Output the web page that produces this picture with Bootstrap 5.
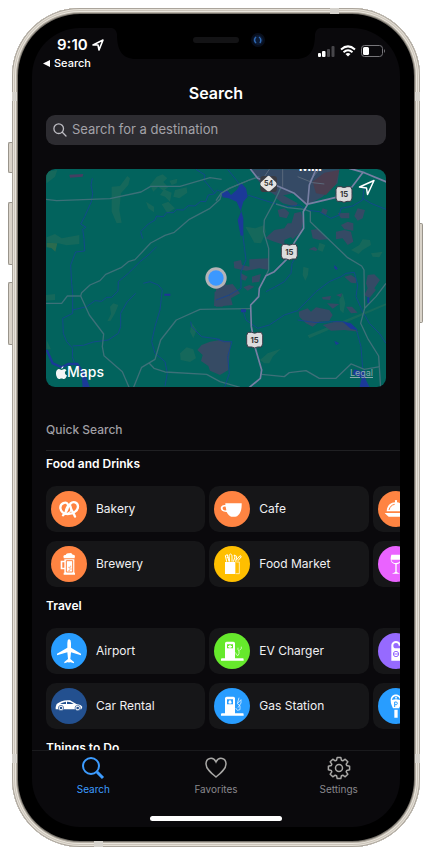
<!DOCTYPE html>
<html lang="en">
<head>
<meta charset="utf-8">
<meta name="viewport" content="width=device-width, initial-scale=1">
<title>Search</title>
<link href="https://cdn.jsdelivr.net/npm/bootstrap@5.3.0/dist/css/bootstrap.min.css" rel="stylesheet">
<style>
  body { font-family: Inter, "Liberation Sans", sans-serif; background: #fff; }
  .stage { height: 100vh; min-height: 600px; padding: 8px 12px; }
  .phone {
    border-radius: 68px; padding: 20px; background: #000;
    box-shadow: inset 0 0 0 1px #aaa49b, inset 0 0 0 2px #e6e1d8, inset 0 0 0 3px #cdc6bb,
      inset 0 0 0 4px #e9e5dd, inset 0 0 0 5px #b5aea3, inset 0 0 0 6px #77736c;
  }
  .side-key { position: absolute; width: 4px; left: -4px; border-radius: 2px 0 0 2px; background: #d9d3c9; border: 1px solid #99948b; border-right: 0; }
  .key-mute { top: 134px; height: 31px; }
  .key-up { top: 194px; height: 63px; }
  .key-down { top: 274px; height: 63px; }
  .key-power { top: 215px; height: 100px; left: auto; right: -3px; width: 3px; border-radius: 0 2px 2px 0; border: 1px solid #99948b; border-left: 0; }
  .band { position: absolute; background: #d6d3cd; }
  .band-h { width: 9px; height: 6px; }
  .band-v { width: 5px; height: 9px; }
  .display { border-radius: 48px; background: #0a090c; color: #fff; }
  .notch { position: absolute; top: 0; left: 50%; transform: translateX(-50%); }
  .status { height: 52px; padding: 7px 15px 0 11px; }
  .clock { font-size: 15px; line-height: 20px; font-weight: 600; padding-left: 14px; gap: 4px; }
  .back-link { font-size: 11px; line-height: 16px; font-weight: 500; color: #fff; gap: 4px; }
  .signals { gap: 5px; padding-top: 10px; }
  .app-title { font-size: 16px; line-height: 24px; font-weight: 600; margin: 1px 0 10px; }
  .side-pad { padding: 0 14px; }
  .finder { background: #2d2c31; border-radius: 9px; height: 30px; padding: 0 7px; gap: 5px; }
  .finder input { background: none; border: 0; outline: 0; padding: 0; color: #fff; font-size: 13px; min-width: 0; }
  .finder input::placeholder { color: #a3a2a8; opacity: 1; }
  .map-box { height: 218px; margin: 24px 14px 0; border-radius: 9px; background: #02635d; }
  .map-brand { position: absolute; left: 10px; bottom: 6px; font-size: 14px; line-height: 18px; font-weight: 500; gap: 0; }
  .map-legal { position: absolute; right: 13px; bottom: 7px; font-size: 9px; line-height: 14px; color: #8aa9ab; }
  .map-locate { position: absolute; right: 11px; top: 10px; line-height: 0; }
  .quick-title { font-size: 12px; line-height: 16px; font-weight: 500; color: #a09fa4; margin: 35px 0 0 14px; padding-bottom: 12px; border-bottom: 1px solid #202023; }
  .group-title { font-size: 12px; line-height: 16px; font-weight: 600; margin: 0 0 14px 14px; }
  .group { margin-bottom: 11px; }
  .group-first { margin-top: 5px; }
  .tiles { display: grid; grid-template-rows: repeat(2, 46px); grid-auto-flow: column; grid-auto-columns: 45%; gap: 9px 4px; margin-left: 14px; overflow-x: auto; scrollbar-width: none; }
  .tiles::-webkit-scrollbar, .scroller::-webkit-scrollbar { display: none; }
  .tile { background: #161618; border: 0; border-radius: 10px; padding: 0 5px; gap: 9px; color: #f0f0f2; font-size: 12px; line-height: 18px; }
  .disc { width: 36px; height: 36px; flex: none; fill: #fff; border-radius: 50%; }
  .c-orange { background: #ff8442; } .c-yellow { background: #ffbf00; } .c-pink { background: #ea63ff; }
  .c-blue { background: #289dff; } .c-navy { background: #23508f; } .c-green { background: #66e92c; } .c-violet { background: #966aff; }
  .scroller { min-height: 0; overflow-y: auto; scrollbar-width: none; }
  .tabs { border-top: 1px solid #1a1a1d; padding-top: 5px; }
  .tabs a { color: #89888d; font-size: 10px; line-height: 12px; gap: 3px; }
  .tabs a.active { color: #3d9cff; }
  .tabs svg { fill: none; stroke: #a9a8a6; }
  .tabs .active svg { stroke: #3d9cff; }
  .home-bar { width: 36%; height: 5px; border-radius: 3px; background: #fff; margin: 21px auto 6px; }
</style>
</head>
<body>
<div class="stage">
  <div class="phone position-relative h-100">
    <span class="side-key key-mute"></span><span class="side-key key-up"></span><span class="side-key key-down"></span><span class="side-key key-power"></span>
    <span class="band band-h" style="top:0;left:78%"></span><span class="band band-h" style="bottom:0;left:20%"></span>
    <span class="band band-v" style="top:10%;left:0"></span><span class="band band-v" style="top:10%;right:0"></span>
    <span class="band band-v" style="bottom:10%;left:0"></span><span class="band band-v" style="bottom:10%;right:0"></span>

    <div class="display position-relative h-100 overflow-hidden d-flex flex-column">
      <svg class="notch" width="208" height="32" viewBox="0 0 208 32" aria-hidden="true">
        <path d="M0 0H208Q204 1 203 6C203 22 198 31 184 31H24C10 31 5 22 5 6Q4 1 0 0Z"/>
        <rect x="81" y="9" width="46" height="6" rx="3" fill="#131315"/>
        <circle cx="146" cy="12" r="7" fill="#080e1b"/><circle cx="146" cy="12" r="5" fill="#0c1b35"/>
        <path d="M144 9q-3 3 0 6M147 9q3 2 1 6" fill="none" stroke="#2e68b2" stroke-width="1.500"/>
      </svg>

      <header>
        <div class="status d-flex justify-content-between">
          <div>
            <div class="clock d-flex align-items-center">9:10
              <svg width="12" height="12" viewBox="0 0 12 12" fill="none" stroke="#fff" stroke-width="1.6" stroke-linejoin="round"><path d="M1 6L11 1L7 11L6 6Z"/></svg>
            </div>
            <a href="#" class="back-link d-flex align-items-center text-decoration-none">
              <svg width="7" height="7" viewBox="0 0 7 7" fill="#fff"><path d="M0 3.500L7 0V7Z"/></svg>Search
            </a>
          </div>
          <div class="signals d-flex align-items-center align-self-start">
            <svg width="17" height="12" viewBox="0 0 17 12" fill="#fff"><rect y="8" width="3" height="4" rx="1"/><rect x="4" y="6" width="3.500" height="6" rx="1"/><rect x="9" y="4" width="3" height="8" rx="1" fill="#47464a"/><rect x="13.500" y="1" width="3" height="11" rx="1" fill="#47464a"/></svg>
            <svg width="16" height="12" viewBox="0 0 16 12" fill="none" stroke="#fff" stroke-width="2"><path d="M1 4.500Q8-1.700 15 4.500M3.500 7.200Q8 3.200 12.500 7.200"/><path d="M5.500 9Q8 7 10.500 9L8 11.600Z" fill="#fff" stroke="none"/></svg>
            <svg width="24" height="12" viewBox="0 0 24 12"><rect x=".5" y=".5" width="21" height="11" rx="3" fill="none" stroke="#77767a"/><rect x="2" y="2" width="6" height="8" rx="1.500" fill="#fff"/><path d="M23 4v4q2-2 0-4" fill="#77767a"/></svg>
          </div>
        </div>
        <h1 class="app-title text-center">Search</h1>
        <div class="side-pad">
          <label class="finder d-flex align-items-center">
            <svg width="14" height="14" viewBox="0 0 14 14" fill="none" stroke="#bdbcc2" stroke-width="1.300" stroke-linecap="round"><circle cx="5.700" cy="5.700" r="4.800"/><path d="M9.300 9.300L13 13"/></svg>
            <input class="flex-fill" type="search" placeholder="Search for a destination" aria-label="Search for a destination">
          </label>
        </div>
      </header>

      <main class="scroller flex-fill">
        <div class="map-box position-relative overflow-hidden">
          <svg class="w-100 h-100 d-block" viewBox="0 0 340 218" preserveAspectRatio="xMidYMid slice" role="img" aria-label="Map">
            <!-- western half, drawn in thirds of a unit -->
            <g transform="translate(-6 -9) scale(.3333)">
              <g fill="#15685b">
                <path d="M215 80L240 78L262 48L270 55L265 75L243 100L238 150L245 188L230 190L215 155Z"/>
                <path d="M18 35L52 30L45 50L20 70ZM20 232L45 222L65 235L118 225V252L80 256L55 250L20 248ZM18 405L45 402V420L18 422ZM210 440L220 430L235 435L225 460L212 482L202 484L213 462ZM420 580L440 562L460 568L468 595L450 606L422 600ZM455 488L470 510L460 535L450 515ZM20 540L33 568H20Z"/>
                <path d="M330 75L350 50L368 43L382 55L370 66L385 82L370 92L355 80L340 95ZM388 62L412 56L410 70L395 75ZM372 88L395 98L390 125L375 110L360 105ZM405 90L440 82L442 98L418 115L400 110ZM318 125L342 140V157L325 145ZM365 133L385 125L405 145L382 160Z"/>
              </g>
              <path d="M20 248L52 250L46 275L34 264L20 262Z" fill="#2b6b4e"/>
              <path d="M88 44L130 42L128 50L90 53Z" fill="#453f62"/>
              <path d="M485 555L510 545L540 540L572 545L570 570L565 630L540 645L510 632L505 618L483 603L488 585L472 570Z" fill="#364b64"/>
              <path d="M524 395L540 390L560 400L548 440L522 438Z" fill="#354a65"/>
              <g fill="none" stroke="#174494" stroke-width="2.500" stroke-linejoin="round">
                <path d="M157 55L153 75L158 100L154 125L134 170L122 192L138 202L128 208L132 235L134 273L107 276L92 315L95 370L98 400V460L68 475L70 520L80 545L98 565L97 590L103 608"/>
                <path d="M98 450L140 440L165 422L185 424L200 412L215 412L234 393L235 365L265 340L300 305L325 285L350 260"/>
                <path d="M98 558L130 556L160 546L205 540L235 520L242 500V460L262 425L287 400"/>
                <path d="M310 370L330 365L355 375L367 390L360 450L345 500L335 545L345 580L375 605L382 640L375 678"/>
                <path d="M308 236L302 215L325 192L345 180L350 168L370 170L380 158L400 158L410 149L430 150L445 137L465 138L482 124L497 125L505 105L522 102L532 90L550 98M468 28L495 45L492 60L525 100"/>
                <path d="M452 485L455 500L485 530L540 538"/>
              </g>
              <path d="M20 570L38 610L65 622L85 612H112L130 640" fill="none" stroke="#1b3998" stroke-width="7"/>
              <path d="M124 632L134 640L150 684H128Z" fill="#1b3998"/>
              <path d="M373 404H391" stroke="#20339a" stroke-width="6"/>
              <g fill="none" stroke="#3d7078" stroke-width="4" stroke-linejoin="round">
                <path d="M18 118L50 122L210 116L303 96L332 79H420L510 53L545 58"/>
                <path d="M18 430H65L82 408H122L125 398L150 375L180 362L197 343L245 322L265 305L285 299L332 249L375 226L403 217L448 178L510 145L540 118L545 100L568 85L628 60"/>
                <path d="M122 408L148 465L191 522L187 560L192 587L247 635L268 684"/>
                <path d="M280 684L305 622L345 598L362 540L409 480L480 448L632 446M328 610L342 625L375 636L500 643L540 665L600 682"/>
              </g>
            </g>
            <!-- eastern half -->
            <g transform="translate(170 -9) scale(.3333)">
              <g fill="#15685b"><path d="M88 200L118 205L145 195L150 215L135 250L115 248L105 230ZM262 320L278 325L276 345L268 362L260 345ZM310 248L328 255L320 275L305 270ZM405 270L430 255L440 238L462 240L465 255L440 270L428 282ZM465 280L500 275L490 292L470 290ZM275 526L510 430V436L280 535ZM132 600L155 580L195 566L170 590L160 610L145 610ZM370 420L380 400L388 430L382 460L372 450Z"/></g>
              <g fill="#354a65">
                <path d="M104 28H370L365 70L340 90L320 110L272 136L230 100L185 110L150 88L125 60Z"/>
                <path d="M175 110L200 105L245 130L240 140L200 130ZM185 150L205 145L220 158L212 175L190 170ZM235 160L255 155L262 180L255 215L230 238L215 218L225 195ZM175 210L205 205L215 190L250 190L240 225L205 240L205 255L175 245L148 235Z"/>
                <path d="M285 210L305 207L330 230L335 238L310 240L290 235ZM278 268L295 260L305 268L300 273ZM365 160L400 158V175L375 175ZM395 185L412 190V212L385 208L375 195ZM425 145L447 150L440 175L425 182L415 168ZM360 215L385 210L405 215L412 245L395 255L380 235L360 238ZM320 145L335 150L330 165L315 158Z"/>
                <path d="M53 305L75 300L78 315L100 320V298L158 295V330L130 325L90 332L55 325ZM108 350L135 342L130 365L108 368ZM75 340L95 350L88 362L75 358ZM82 382L100 375L115 380L95 392ZM0 360L25 355L30 375L50 372L72 400L45 415L50 435L0 440Z"/>
                <path d="M248 455L275 445L285 455L300 442L340 450L350 465L340 482L310 485L290 500L270 490L250 470ZM318 412L345 408L342 420L320 418ZM333 430L370 432L350 446ZM320 495L365 483L392 490L405 505L430 515L385 510L345 512ZM385 350L405 345L420 355V370L405 368ZM455 345L475 343L492 360L475 385L480 390L460 415L445 405L455 385L450 370ZM360 405L378 400L375 412ZM390 440L408 440L425 458L405 460Z"/>
              </g>
              <path d="M290 65L325 38L370 30L360 72L330 105L300 100Z" fill="#4a3e50"/>
              <g fill="none" stroke="#174494" stroke-width="2.500" stroke-linejoin="round">
                <path d="M80 220L85 260L90 300L75 335V385L40 405L0 420"/>
                <path d="M150 395L175 382L205 365L225 340L228 310L240 290M95 105L180 132L215 140L250 135L270 150L310 155L345 175L370 165L375 145L410 138L440 120L445 80M440 115L465 130L510 148"/>
                <path d="M82 455L90 480L125 505L160 495L205 465L245 452L300 395L340 365L375 350L390 340L415 337L425 375L420 410L440 455L460 490L490 520L510 550M245 480L300 488L350 485L385 485L420 505L435 560L440 625M0 537L25 545L48 545L35 590L40 640L25 684M35 28L65 65L72 80"/>
              </g>
              <path d="M15 95L35 92L45 105L62 90L75 68L90 85L95 110L82 125L75 150L82 175V225L74 228L65 180L75 155L62 125L38 115L20 112Z" fill="#1b3998"/>
              <path d="M380 485L405 490L425 510L405 507ZM415 628L440 635L445 625L450 660L462 684H430L437 655L410 642ZM355 315L365 325L362 330L355 325ZM355 542L370 550L360 555ZM454 412H460V430H454ZM75 448H90V457H75Z" fill="#1b3998"/>
              <g fill="none" stroke="#3f7079" stroke-width="4" stroke-linejoin="round">
                <path d="M0 122L15 100L40 85L100 60L130 50M195 82L175 125L145 180L143 215L158 265V330L150 347M180 132L215 143L265 148L283 155V185L395 293L437 318L444 330L446 445L434 490L455 535L488 588L494 684M446 445L480 410L510 370M137 643L205 650L220 638L270 632L310 655H360L405 612L445 628L492 620"/>
              </g>
              <path d="M200 28V80M245 50L290 68L325 72M310 28L280 65M160 28L145 50" fill="none" stroke="#5a687b" stroke-width="3"/>
              <g fill="none" stroke="#777fa3" stroke-width="5" stroke-linejoin="round" stroke-linecap="round">
                <path d="M104 28L125 55L190 80L235 100L272 133L360 112L405 85L440 38M400 25L445 38L512 66M300 28L280 75L275 133L262 155L263 205L235 248L215 295L175 335L150 347L130 385L128 410L104 435L106 500L118 565L137 630L133 655L98 684"/>
              </g>
              <g font-family="Inter, sans-serif" font-weight="700" text-anchor="middle">
                <rect x="133" y="48" width="50" height="48" rx="10" fill="#3b3c43"/>
                <path d="M153 50Q158 45 163 50L180 67Q184 72 180 77L163 92Q158 96 153 92L135 77Q130 72 135 67Z" fill="#e5e3e2"/>
                <text x="158" y="79" font-size="21" fill="#333">54</text>
                <g id="us15"><path d="M364 80H375Q384 85 393 80H404Q410 88 408 100Q410 117 404 124H393Q384 130 375 124H364Q358 117 360 100Q358 88 364 80Z" fill="#dddcdd" stroke="#383946" stroke-width="3"/><text x="384" y="111" font-size="23" fill="#333">15</text></g>
                <use href="#us15" x="-164" y="173"/><use href="#us15" x="-268" y="437"/>
                <text x="283" y="33" font-size="40" fill="#fff">Mill</text>
              </g>
              <circle cx="0" cy="354" r="32" fill="#b5b4b7"/><circle cx="0" cy="354" r="23" fill="#3b98ff"/>
            </g>
          </svg>
          <div class="map-brand d-flex align-items-center">
            <svg width="11" height="13" viewBox="0 0 22 26" fill="#f2f5f5"><path d="M15 0Q15 5 10.500 6Q10 2 15 0ZM11 8C13 8 14 6 17 6Q20 6.500 21 8.500C16 12 17.500 17 22 19C20 24 18 26 16 26C14 26 13 25 11 25C9 25 8 26 6 26C3 26 0 20 0 15C0 8 4 6 6 6C8 6 9.500 8 11 8Z"/></svg>Maps
          </div>
          <button class="map-locate btn p-0 border-0" type="button" aria-label="Locate me"><svg width="17" height="17" viewBox="0 0 17 17" fill="none" stroke="#fff" stroke-width="1.500" stroke-linejoin="round"><path d="M1.500 8L16 1.500L9.500 15.500L8.500 9Z"/></svg></button>
          <a class="map-legal" href="#">Legal</a>
        </div>

        <h2 class="quick-title">Quick Search</h2>

        <section class="group group-first">
          <h3 class="group-title">Food and Drinks</h3>
          <div class="tiles">
            <button type="button" class="tile d-flex align-items-center text-start"><svg class="disc c-orange" viewBox="0 0 108 108" aria-hidden="true"><path d="M36 73C42 68 55 51 50 39C45 31 28 36 28 50C29 62 38 69 50 69C66 69 81 60 81 46C80 33 66 30 59 37C51 46 66 60 72 77" fill="none" stroke="#fff" stroke-width="7" stroke-linecap="round"/><path d="M43 62C44 52 48 44 56 43M50 67C62 63 63 52 57 42" fill="none" stroke="#fff" stroke-width="4"/></svg>Bakery</button>
            <button type="button" class="tile d-flex align-items-center text-start"><svg class="disc c-orange" viewBox="0 0 108 108" aria-hidden="true"><path d="M38 35Q35 26 44 27Q46 20 54 22Q62 18 65 26Q74 25 71 35V37H38ZM40 40H70V80H72V86H38V80H40V70H29V44H40ZM34 49V65H40V49Z"/><path d="M46 44H65V78H46V44" fill="none" stroke="#ff8442" stroke-width="3"/><path d="M52 64H58M54 69H62M59 59V64M52 74H57" stroke="#ff8442" stroke-width="2"/></svg>Brewery</button>
            <button type="button" class="tile d-flex align-items-center text-start"><svg class="disc c-orange" viewBox="0 0 108 108" aria-hidden="true"><path fill-rule="evenodd" d="M34 37H83C84 55 79 67 73 72Q70 77 64 77H52Q45 76 38 63C15 64 15 40 34 42ZM35 47C22 44 23 60 37 58Z"/></svg>Cafe</button>
            <button type="button" class="tile d-flex align-items-center text-start"><svg class="disc c-yellow" viewBox="0 0 108 108" aria-hidden="true"><path d="M33 48H64V84H33Z"/><path d="M67 48H76V83H65" fill="none" stroke="#fff" stroke-width="2"/><g fill="none" stroke="#fff" stroke-width="3"><path d="M38 47L34 29L40 26L45 47M47 47L45 28Q50 20 54 28V47M58 47L63 33L60 27L68 31L65 47M67 42L78 29L82 32L72 44M38 35H44"/></g></svg>Food Market</button>
            <button type="button" class="tile d-flex align-items-center" aria-label="Restaurant"><svg class="disc c-orange" viewBox="0 0 108 108" aria-hidden="true"><path d="M26 61C27 43 38 35 51 34V31Q49 27 54 27Q59 27 57 31V34C71 36 82 47 82 61ZM20 66H88L82 72L78 77H32L26 72Z"/><path d="M33 57Q37 42 50 40" fill="none" stroke="#ff8442" stroke-width="3"/></svg></button>
            <button type="button" class="tile d-flex align-items-center" aria-label="Nightlife"><svg class="disc c-pink" viewBox="0 0 108 108" aria-hidden="true"><path d="M40 26H68C73 43 67 53 56 55V78L66 83H42L52 78V55C39 53 35 43 40 26Z"/><path d="M40 41H68Q66 51 54 51Q42 51 40 41" fill="#ea63ff"/></svg></button>
          </div>
        </section>

        <section class="group">
          <h3 class="group-title">Travel</h3>
          <div class="tiles">
            <button type="button" class="tile d-flex align-items-center text-start"><svg class="disc c-blue" viewBox="0 0 108 108" aria-hidden="true"><path d="M54 18Q60 20 60 30V44L90 62V67L60 58L58 78L69 87V91L56 87L54 91L52 87L40 91V87L51 78L49 58L18 67V62L49 44V30Q49 20 54 18Z"/></svg>Airport</button>
            <button type="button" class="tile d-flex align-items-center text-start"><svg class="disc c-navy" viewBox="0 0 108 108" aria-hidden="true"><path d="M14 57L17 48Q34 34 57 37L76 48Q91 50 94 57L91 64H14Z"/><path d="M28 47Q36 42 45 41V48H29ZM48 41Q58 40 68 48H48Z" fill="#23508f"/><g stroke="#23508f" stroke-width="2"><circle cx="30" cy="60" r="8"/><circle cx="80" cy="60" r="8"/></g><circle cx="30" cy="60" r="4" fill="#23508f"/><circle cx="80" cy="60" r="4" fill="#23508f"/></svg>Car Rental</button>
            <button type="button" class="tile d-flex align-items-center text-start"><svg class="disc c-green" viewBox="0 0 108 108" aria-hidden="true"><path d="M33 31Q33 26 38 26H58Q63 26 63 31V76H87Q89 76 89 80V83H21V79Q21 76 24 76H33Z"/><path d="M39 34H57V46H39Z" fill="#66e92c"/><path d="M46 36H50V39H54V43H50V46H46V43H42V39H46Z"/><path d="M64 59Q67 60 67 65Q73 72 75 62V54M75 54Q70 49 72 44M76 52L82 47V41" fill="none" stroke="#fff" stroke-width="2"/></svg>EV Charger</button>
            <button type="button" class="tile d-flex align-items-center text-start"><svg class="disc c-blue" viewBox="0 0 108 108" aria-hidden="true"><path d="M33 31Q33 26 38 26H58Q63 26 63 31V76H87Q89 76 89 80V83H21V79Q21 76 24 76H33Z"/><path d="M39 34H57V49H39Z" fill="#289dff"/><path d="M48 35L53 42Q54 47 48 47Q42 47 43 42Z"/><path d="M65 60L70 67L78 65V53L70 47L75 29M71 46L81 35V45L72 59" fill="none" stroke="#fff" stroke-width="2"/></svg>Gas Station</button>
            <button type="button" class="tile d-flex align-items-center" aria-label="Hotel"><svg class="disc c-violet" viewBox="0 0 108 108" aria-hidden="true"><path d="M40 36C42 20 66 20 68 36V83H40Z"/><circle cx="54" cy="38" r="8" fill="#966aff"/><path d="M54 38H72V46H58Z" fill="#966aff"/><circle cx="54" cy="63" r="8" fill="none" stroke="#966aff" stroke-width="3"/><path d="M46 63H62" stroke="#966aff" stroke-width="3"/></svg></button>
            <button type="button" class="tile d-flex align-items-center" aria-label="Parking"><svg class="disc c-blue" viewBox="0 0 108 108" aria-hidden="true"><path d="M38 36C38 14 70 14 70 36C70 48 66 54 63 61H45C42 54 38 48 38 36ZM49 65H59V89H49Z"/><path d="M42 36Q44 25 54 25Q64 25 66 36Q54 32 42 36Z" fill="#289dff"/><path d="M54 35L51 27H57Z"/><path d="M50 57V42H56Q60 46 56 50H51" fill="none" stroke="#289dff" stroke-width="3"/></svg></button>
          </div>
        </section>

        <section class="group"><h3 class="group-title">Things to Do</h3></section>
      </main>

      <footer>
        <nav class="tabs row g-0 text-center">
          <a href="#" class="col active text-decoration-none d-flex flex-column align-items-center" aria-current="page"><svg width="24" height="24" viewBox="0 0 24 24" stroke-width="2"><circle cx="10" cy="10" r="8"/><path d="M16 16L22 22" stroke-width="3"/></svg>Search</a>
          <a href="#" class="col text-decoration-none d-flex flex-column align-items-center"><svg width="24" height="24" viewBox="0 0 24 24" stroke-width="1.500"><path d="M12 21C7 17 2 13 2 8C2 2 9 0 12 6C15 0 22 2 22 8C22 13 17 17 12 21Z"/></svg>Favorites</a>
          <a href="#" class="col text-decoration-none d-flex flex-column align-items-center"><svg width="24" height="24" viewBox="0 0 24 24" stroke-width="1.500" stroke-linejoin="round"><path d="M10.200 1.400H13.800L14.400 4.200L15.800 4.800L18.200 3.200L20.800 5.800L19.200 8.200L19.800 9.600L22.600 10.200V13.800L19.800 14.400L19.200 15.800L20.800 18.200L18.200 20.800L15.800 19.200L14.400 19.800L13.800 22.600H10.200L9.600 19.800L8.200 19.200L5.800 20.800L3.200 18.200L4.800 15.800L4.200 14.400L1.400 13.800V10.200L4.200 9.600L4.800 8.200L3.200 5.800L5.800 3.200L8.200 4.800L9.600 4.200Z"/><circle cx="12" cy="12" r="3.500"/></svg>Settings</a>
        </nav>
        <div class="home-bar"></div>
      </footer>
    </div>
  </div>
</div>
<script src="https://cdn.jsdelivr.net/npm/bootstrap@5.3.0/dist/js/bootstrap.bundle.min.js"></script>
</body>
</html>
